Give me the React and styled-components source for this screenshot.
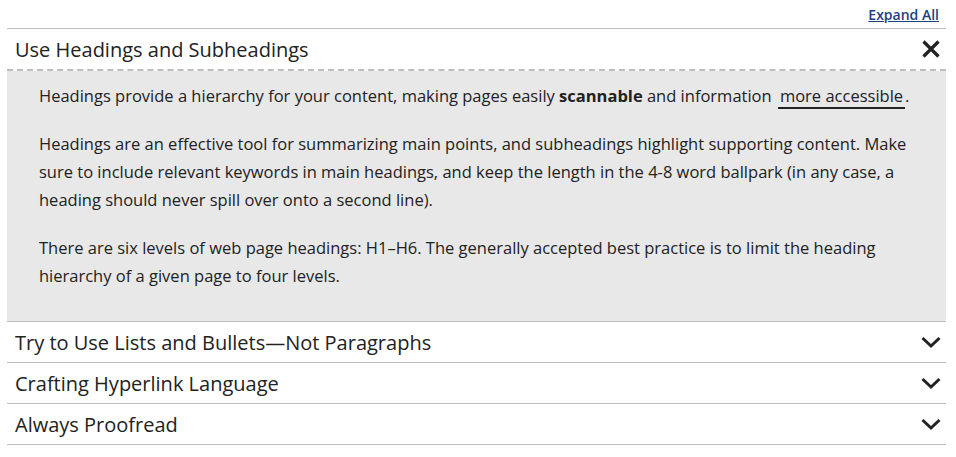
import styled, { createGlobalStyle } from 'styled-components';

const GlobalStyle = createGlobalStyle`
    body {
        margin: 0;
        background: #fff;
        font-family: "Open Sans", "Liberation Sans", sans-serif;
        color: #222;
    }
`

const Wrapper = styled.div`
    padding: 5px 10px 0 7px;
`
const TopBar = styled.div`
    display: flex;
    justify-content: flex-end;
    height: 23px;
    padding-right: 7px;
`
const ExpandLink = styled.a`
    font-size: 14px;
    font-weight: 600;
    color: #1d3f7c;
    text-decoration: underline;
    line-height: 20px;
    cursor: pointer;
`
const List = styled.div`
    border-top: 1px solid #bdbdbd;
`
const Item = styled.div`
    border-bottom: 1px solid #bdbdbd;
`
const Header = styled.div`
    display: flex;
    align-items: center;
    justify-content: space-between;
    height: 40px;
    padding: 0 4px 0 8px;
    font-size: 20px;
    color: #222;
    border-bottom: ${props => props.open ? '2px dashed #bdbdbd' : 'none'};
    box-sizing: content-box;
`
const Icon = styled.svg`
    width: 22px;
    height: 22px;
    display: block;
`
const Panel = styled.div`
    background: #e8e8e8;
    padding: 11px 32px 11px 32px;
`
const Para = styled.p`
    margin: 0 0 20px;
    font-size: 16.5px;
    line-height: 28px;
    color: #222;
`
const Strong = styled.b`
    font-weight: 700;
`
const InlineLink = styled.a`
    color: #222;
    text-decoration: none;
    border-bottom: 2px solid #222;
    padding: 0 2px;
    margin-left: 2px;
`

const CloseIcon = () => (
    <Icon viewBox="0 0 22 22">
        <path d="M3.5 3.5 L18.5 18.5 M18.5 3.5 L3.5 18.5" stroke="#222" strokeWidth="3.2" fill="none" />
    </Icon>
)

const ChevronIcon = () => (
    <Icon viewBox="0 0 22 22">
        <path d="M2.5 7 L11 15 L19.5 7" stroke="#222" strokeWidth="3" fill="none" strokeLinejoin="miter" />
    </Icon>
)

const sections = [
    'Try to Use Lists and Bullets\u2014Not Paragraphs',
    'Crafting Hyperlink Language',
    'Always Proofread',
]

const App = () => {
    return (
        <Wrapper>
            <GlobalStyle />
            <TopBar>
                <ExpandLink>Expand All</ExpandLink>
            </TopBar>
            <List>
                <Item>
                    <Header open>
                        <span>Use Headings and Subheadings</span>
                        <CloseIcon />
                    </Header>
                    <Panel>
                        <Para>
                            Headings provide a hierarchy for your content, making pages easily <Strong>scannable</Strong> and information <InlineLink>more accessible</InlineLink>.
                        </Para>
                        <Para>
                            Headings are an effective tool for summarizing main points, and subheadings highlight supporting content. Make sure to include relevant keywords in main headings, and keep the length in the 4-8 word ballpark (in any case, a heading should never spill over onto a second line).
                        </Para>
                        <Para>
                            There are six levels of web page headings: H1–H6. The generally accepted best practice is to limit the heading hierarchy of a given page to four levels.
                        </Para>
                    </Panel>
                </Item>
                {sections.map((title, ind) => (
                    <Item key={ind}>
                        <Header>
                            <span>{title}</span>
                            <ChevronIcon />
                        </Header>
                    </Item>
                ))}
            </List>
        </Wrapper>
    )
}

export default App;
